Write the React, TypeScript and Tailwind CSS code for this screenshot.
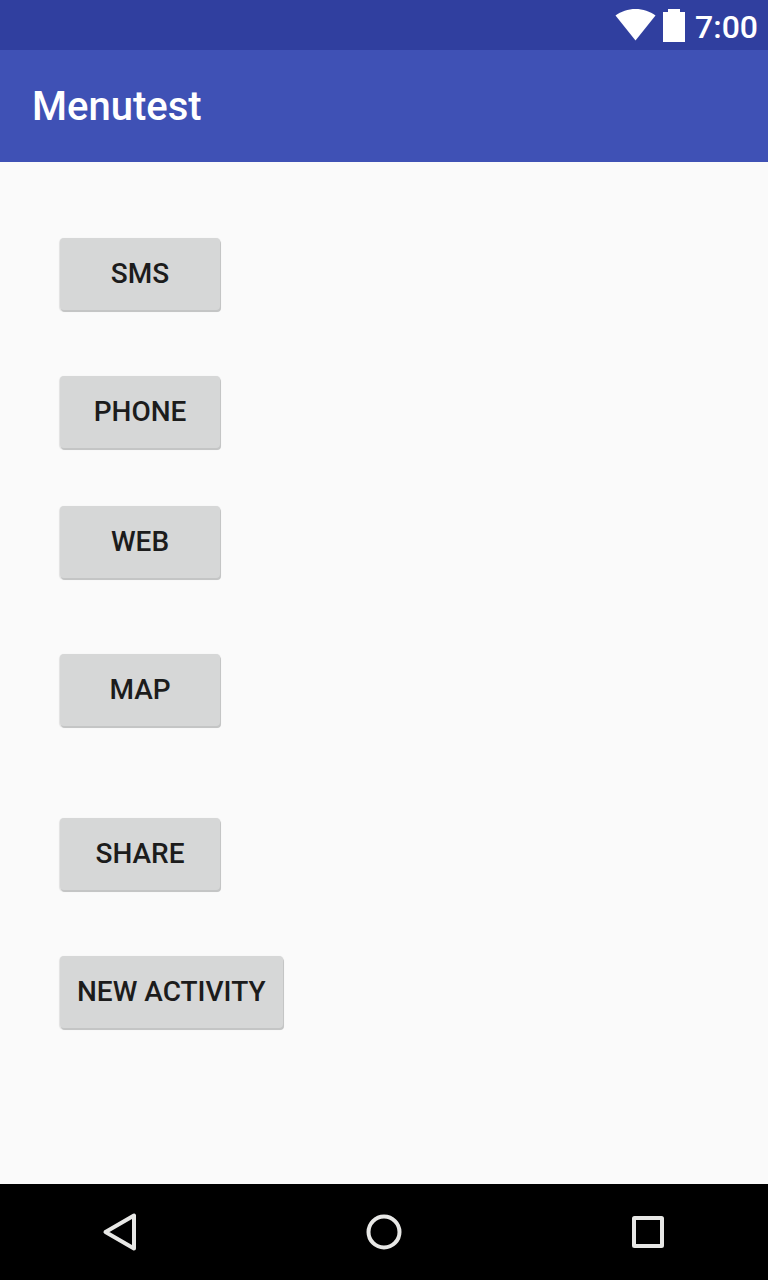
import type { ReactNode } from "react";

const actions = [
  { label: "SMS", spacing: "mt-19" },
  { label: "PHONE", spacing: "mt-[66px]" },
  { label: "WEB", spacing: "mt-[58px]" },
  { label: "MAP", spacing: "mt-19" },
  { label: "SHARE", spacing: "mt-23" },
  { label: "NEW ACTIVITY", spacing: "mt-[66px]" },
];

function StatusBar() {
  return (
    <div className="flex h-[50px] items-start justify-end bg-[#303f9f] pr-[10px] text-white">
      <svg className="mt-[9px] mr-[7px]" width="41" height="32" viewBox="0 0 41 32" fill="currentColor" aria-hidden="true">
        <path d="M20.5 31.5 L0.5 6.6 C6 2.4 13 0 20.5 0 S35 2.4 40.5 6.6 Z" />
      </svg>
      <svg className="mt-[9px] mr-[10px]" width="22" height="33" viewBox="0 0 22 33" fill="currentColor" aria-hidden="true">
        <path d="M5 0H17V3H22V33H0V3H5Z" />
      </svg>
      <time className="mt-[9px] text-[32px] leading-9 font-medium">7:00</time>
    </div>
  );
}

function NavButton({ label, children }: { label: string; children: ReactNode }) {
  return (
    <button type="button" aria-label={label} className="flex h-24 w-24 items-center justify-center text-[#e8e8e6]">
      <svg width="48" height="48" viewBox="0 0 48 48" fill="none" stroke="currentColor" strokeWidth="4" strokeLinejoin="round" aria-hidden="true">
        {children}
      </svg>
    </button>
  );
}

export default function App() {
  return (
    <div className="flex min-h-screen flex-col bg-[#fafafa] font-[Roboto,sans-serif]">
      <StatusBar />
      <header className="flex h-28 items-center bg-[#3f51b5] px-8 pt-[2px]">
        <h1 className="text-[40px] leading-12 font-medium text-white">Menutest</h1>
      </header>
      <main className="flex flex-1 flex-col items-start px-15">
        {actions.map(({ label, spacing }) => (
          <button
            key={label}
            type="button"
            className={`${spacing} h-18 min-w-40 rounded-[4px] bg-[#d6d7d7] px-[17px] text-[28px] leading-8 font-medium text-[#1c1c1c] shadow-[1px_2px_0_#c4c5c5,0_1px_1px_1px_rgba(0,0,0,0.1)]`}
          >
            {label}
          </button>
        ))}
      </main>
      <nav aria-label="System" className="flex h-24 justify-between bg-black px-18">
        <NavButton label="Back">
          <path d="M38 7.5V40.5L9.5 24Z" />
        </NavButton>
        <NavButton label="Home">
          <circle cx="24" cy="24" r="15.5" />
        </NavButton>
        <NavButton label="Recent apps">
          <rect x="10" y="10" width="28" height="28" rx="0.5" />
        </NavButton>
      </nav>
    </div>
  );
}
